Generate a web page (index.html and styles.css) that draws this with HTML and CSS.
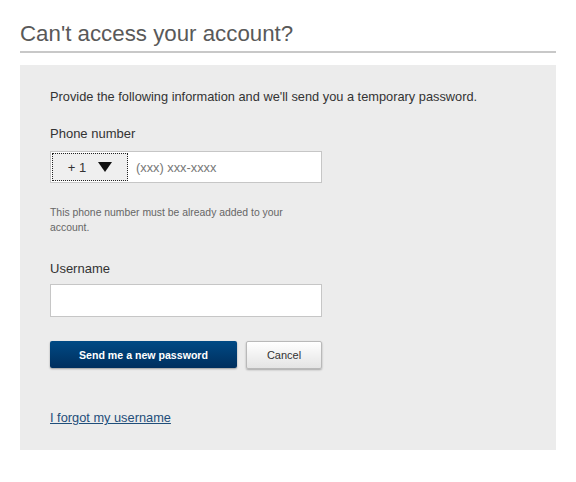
FILE: index.html
```html
<!DOCTYPE html>
<html>
<head>
<meta charset="utf-8">
<link rel="stylesheet" href="styles.css">
</head>
<body>
<h1 class="title">Can't access your account?</h1>
<div class="panel">
  <p class="intro">Provide the following information and we'll send you a temporary password.</p>
  <label class="label label-phone">Phone number</label>
  <div class="phone">
    <div class="country">
      <span class="code">+ 1</span>
      <span class="caret"></span>
    </div>
    <span class="placeholder">(xxx) xxx-xxxx</span>
  </div>
  <p class="help">This phone number must be already added to your<br>account.</p>
  <label class="label label-user">Username</label>
  <div class="textbox"></div>
  <div class="actions">
    <button class="btn-primary">Send me a new password</button>
    <button class="btn-secondary">Cancel</button>
  </div>
  <a class="link" href="#">I forgot my username</a>
</div>
</body>
</html>
```
FILE: styles.css
```css
html, body {
  margin: 0;
  padding: 0;
  background: #ffffff;
}
body {
  font-family: "Liberation Sans", Arial, sans-serif;
  padding: 21px 20px 0 20px;
  color: #333333;
}
.title {
  margin: 0;
  font-size: 22.3px;
  font-weight: normal;
  line-height: 26px;
  color: #595959;
  padding-bottom: 4px;
  border-bottom: 2px solid #c8c8c8;
}
.panel {
  margin-top: 12px;
  background: #ececec;
  padding: 24px 30px 24px 30px;
  min-height: 385px;
  box-sizing: border-box;
  display: flex;
  flex-direction: column;
  align-items: flex-start;
}
.panel > * {
  flex-shrink: 0;
}
.intro {
  margin: 0;
  font-size: 12.8px;
  line-height: 16px;
  color: #333;
}
.label {
  display: block;
  font-size: 13px;
  line-height: 16px;
  color: #333;
}
.label-phone {
  margin-top: 21px;
}
.phone {
  margin-top: 9px;
  width: 272px;
  height: 32px;
  box-sizing: border-box;
  border: 1px solid #c6c6c6;
  background: #fff;
  display: flex;
  align-items: center;
  padding: 1px;
}
.country {
  width: 76px;
  height: 28px;
  box-sizing: border-box;
  border: 1px dotted #222;
  background: #efefef;
  display: flex;
  align-items: center;
  justify-content: center;
  gap: 12px;
  font-size: 13px;
  color: #333;
}
.caret {
  width: 0;
  height: 0;
  border-left: 7px solid transparent;
  border-right: 7px solid transparent;
  border-top: 10px solid #111;
}
.placeholder {
  margin-left: 8px;
  font-size: 12.8px;
  color: #777;
}
.help {
  margin: 22px 0 0 0;
  font-size: 10.4px;
  line-height: 15px;
  color: #666;
}
.label-user {
  margin-top: 26px;
}
.textbox {
  margin-top: 7px;
  width: 272px;
  height: 33px;
  box-sizing: border-box;
  border: 1px solid #c6c6c6;
  background: #fff;
}
.actions {
  margin-top: 24px;
  display: flex;
  gap: 9px;
}
.btn-primary {
  width: 187px;
  height: 27px;
  border: none;
  border-radius: 2px;
  background: linear-gradient(#004a85, #002f5e);
  color: #fff;
  font-family: "Liberation Sans", Arial, sans-serif;
  font-weight: bold;
  font-size: 10.6px;
  box-shadow: 0 1px 2px rgba(0,0,0,0.35);
  padding: 0;
}
.btn-secondary {
  width: 76px;
  height: 28px;
  border: 1px solid #b9b9b9;
  border-radius: 2px;
  background: linear-gradient(#ffffff, #e4e4e4);
  color: #333;
  font-family: "Liberation Sans", Arial, sans-serif;
  font-size: 11px;
  box-shadow: 0 1px 2px rgba(0,0,0,0.3);
  padding: 0;
}
.link {
  margin-top: 41px;
  font-size: 12.8px;
  line-height: 16px;
  color: #1f4e7a;
  text-decoration: underline;
}
```
